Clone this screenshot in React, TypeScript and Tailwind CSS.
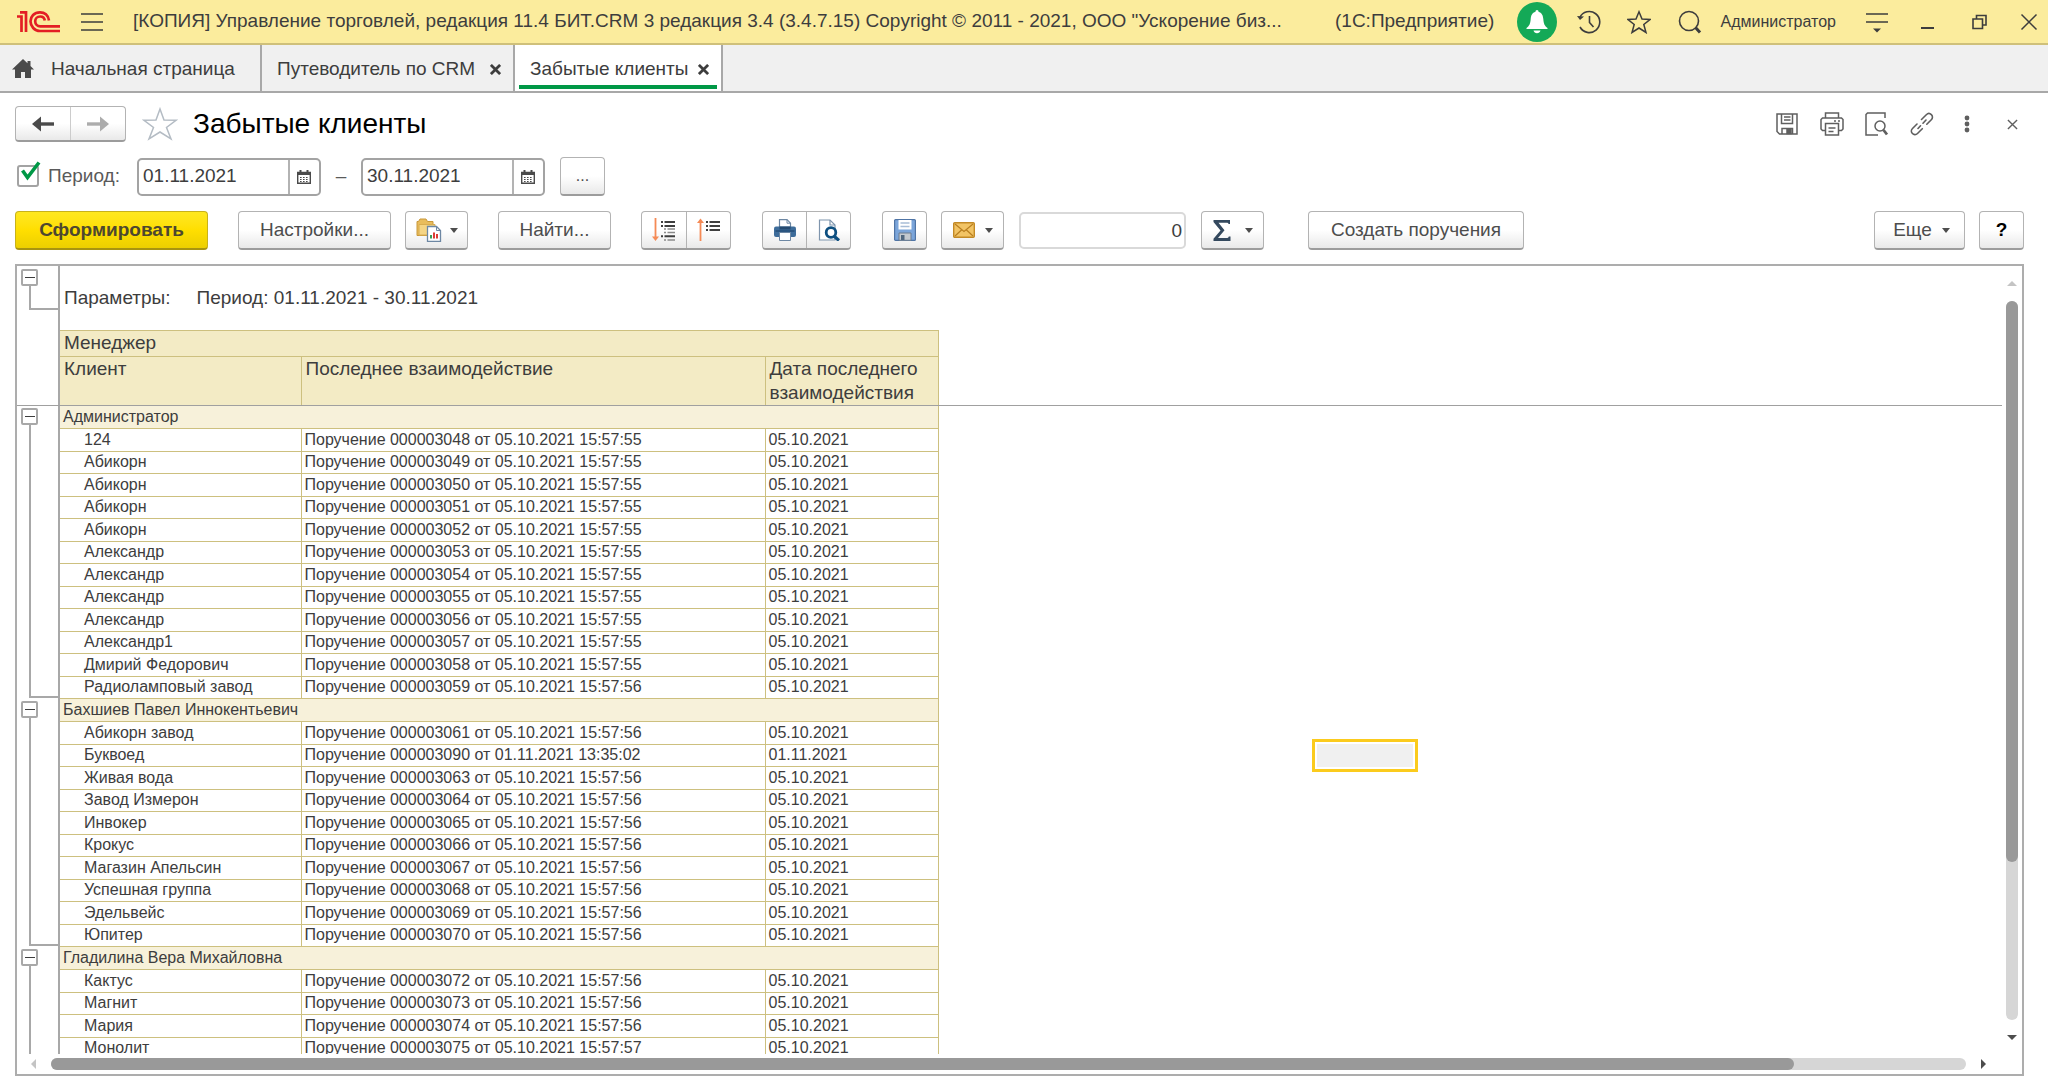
import React from "react";

type Row = [string, string, string];
type Group = { name: string; rows: Row[] };

const T = "05.10.2021 15:57:";
const D = "05.10.2021";
const task = (n: string, at: string) => `Поручение 00000${n} от ${at}`;

const groups: Group[] = [
  {
    name: "Администратор",
    rows: [
      ["124", task("3048", T + "55"), D],
      ["Абикорн", task("3049", T + "55"), D],
      ["Абикорн", task("3050", T + "55"), D],
      ["Абикорн", task("3051", T + "55"), D],
      ["Абикорн", task("3052", T + "55"), D],
      ["Александр", task("3053", T + "55"), D],
      ["Александр", task("3054", T + "55"), D],
      ["Александр", task("3055", T + "55"), D],
      ["Александр", task("3056", T + "55"), D],
      ["Александр1", task("3057", T + "55"), D],
      ["Дмирий Федорович", task("3058", T + "55"), D],
      ["Радиоламповый завод", task("3059", T + "56"), D],
    ],
  },
  {
    name: "Бахшиев Павел Иннокентьевич",
    rows: [
      ["Абикорн завод", task("3061", T + "56"), D],
      ["Буквоед", task("3090", "01.11.2021 13:35:02"), "01.11.2021"],
      ["Живая вода", task("3063", T + "56"), D],
      ["Завод Измерон", task("3064", T + "56"), D],
      ["Инвокер", task("3065", T + "56"), D],
      ["Крокус", task("3066", T + "56"), D],
      ["Магазин Апельсин", task("3067", T + "56"), D],
      ["Успешная группа", task("3068", T + "56"), D],
      ["Эдельвейс", task("3069", T + "56"), D],
      ["Юпитер", task("3070", T + "56"), D],
    ],
  },
  {
    name: "Гладилина Вера Михайловна",
    rows: [
      ["Кактус", task("3072", T + "56"), D],
      ["Магнит", task("3073", T + "56"), D],
      ["Мария", task("3074", T + "56"), D],
      ["Монолит", task("3075", T + "57"), D],
    ],
  },
];

const btn =
  "flex h-[39px] shrink-0 items-center justify-center rounded-[4px] border border-[#b3b3b3] border-b-2 border-b-[#9c9c9c] bg-linear-to-b from-white from-50% to-[#e9e9e9] text-[#4d4d4d]";

function Caret() {
  return (
    <svg className="h-[5px] w-2 shrink-0" viewBox="0 0 8 5" fill="#4d4d4d">
      <path d="M0 0h8L4 5z" />
    </svg>
  );
}

function Cross({ className, width }: { className: string; width: number }) {
  return (
    <svg className={className} viewBox="0 0 12 12" fill="none" stroke="currentColor" strokeWidth={width}>
      <path d="M1 1l10 10M11 1L1 11" />
    </svg>
  );
}

function TitleBar() {
  return (
    <header className="flex h-[45px] shrink-0 items-center border-b-2 border-[#cfc07a] bg-[#fbec9d] pr-2.5 pl-4 text-[#3d3d3d]">
      <svg className="h-6 w-[45px] shrink-0" viewBox="0 0 45 24" fill="none" stroke="#e31e24" strokeWidth="2.7" aria-label="1C">
        <path d="M1 6.500H5.500V22M4 2.300h6V22" />
        <path d="M33 10.500C32.300 5 28.500 2.300 24 2.300c-5.800 0-9.500 4-9.500 9s4 9.700 9.500 9.700H44" />
        <path d="M28.800 10.500c-.4-2.800-2.200-4-4.600-4-3 0-5 2-5 4.800s2.100 5 5 5H44" />
      </svg>
      <button aria-label="Меню" className="ml-5 shrink-0">
        <svg className="h-5 w-[22px]" viewBox="0 0 22 20" stroke="#3d3d3d" strokeWidth="1.6">
          <path d="M0 2h22M0 10h22M0 18h22" />
        </svg>
      </button>
      <h1 className="ml-[30px] w-[1182px] shrink truncate text-[19px]">
        [КОПИЯ] Управление торговлей, редакция 11.4 БИТ.CRM 3 редакция 3.4 (3.4.7.15) Copyright © 2011 - 2021, ООО "Ускорение биз...
      </h1>
      <span className="ml-5 shrink-0 text-[19px]">(1С:Предприятие)</span>
      <div className="ml-auto flex shrink-0 items-center">
        <button aria-label="Уведомления" className="flex size-10 items-center justify-center rounded-full bg-[#14a957]">
          <svg className="h-6 w-[22px]" viewBox="0 0 22 24" fill="white">
            <path d="M11 0c1 0 1.500.8 1.500 1.800C15.800 2.700 17 5.500 17.300 9c.4 5 1.500 7 4.200 9v1H.5v-1c2.700-2 3.800-4 4.200-9C5 5.500 6.200 2.700 9.500 1.800 9.500.8 10 0 11 0zM7.500 20.500h7c-.5 1.800-1.800 2.700-3.500 2.700s-3-.9-3.500-2.700z" />
          </svg>
        </button>
        <button aria-label="История" className="ml-5">
          <svg className="size-6" viewBox="0 0 24 24" fill="none" stroke="#3d3d3d" strokeWidth="1.6">
            <path d="M2.800 7.500A10.500 10.500 0 1 1 3 17M12.500 6v6.500l4 4.500" />
            <path d="M0 6l3 4L7 6.500z" fill="#3d3d3d" stroke="none" />
          </svg>
        </button>
        <button aria-label="Избранное" className="ml-[26px]">
          <svg className="size-6" viewBox="0 0 24 24" fill="none" stroke="#3d3d3d" strokeWidth="1.500">
            <path d="M12 1.800l3 7.200 8 .5-6.200 5 2.200 8-7-4.500L5 22.500l2.200-8L1 9.500 9 9z" />
          </svg>
        </button>
        <button aria-label="Поиск" className="ml-[27px]">
          <svg className="size-6" viewBox="0 0 24 24" fill="none" stroke="#3d3d3d" strokeWidth="1.600">
            <circle cx="11" cy="11" r="9.500" />
            <path d="M17.500 17.500L22 22.500" strokeWidth="3" />
          </svg>
        </button>
        <span className="ml-[19px] text-base">Администратор</span>
        <button aria-label="Настройка панели" className="ml-[30px]">
          <svg className="h-[22px] w-[22px]" viewBox="0 0 22 22" stroke="#3d3d3d" strokeWidth="1.600">
            <path d="M0 3h22M0 11h22" />
            <path d="M7 17.500h8l-4 4z" fill="#3d3d3d" stroke="none" />
          </svg>
        </button>
        <button aria-label="Свернуть" className="ml-8">
          <svg className="size-4" viewBox="0 0 16 16" stroke="#3d3d3d" strokeWidth="2">
            <path d="M1 14h13" />
          </svg>
        </button>
        <button aria-label="Восстановить" className="ml-9">
          <svg className="size-4" viewBox="0 0 16 16" fill="none" stroke="#3d3d3d" strokeWidth="1.600">
            <path d="M1 5h9.500v9.500H1zM4.500 5V1.500H14V11h-3.500" />
          </svg>
        </button>
        <button aria-label="Закрыть" className="ml-8">
          <Cross className="size-[18px]" width={1} />
        </button>
      </div>
    </header>
  );
}

function Tabs() {
  return (
    <nav className="flex h-12 shrink-0 border-b-2 border-[#a8a8a8] bg-[#f0f0f0] text-[19px] text-[#3d3d3d]">
      <a href="#home" className="flex w-[262px] items-center gap-[17px] border-r-2 border-[#a8a8a8] pt-0.5 pl-3">
        <svg className="h-5 w-[22px] shrink-0" viewBox="0 0 22 20" fill="#4a4a4a">
          <path d="M11 0L0 10.500h3V19h6v-6h4v6h6v-8.500h3L18.500 7V2h-3v2.300z" />
        </svg>
        Начальная страница
      </a>
      <div className="flex w-[253px] items-center justify-between border-r-2 border-[#a8a8a8] pt-0.5 pr-3 pl-[15px]">
        <a href="#guide">Путеводитель по CRM</a>
        <button aria-label="Закрыть вкладку">
          <Cross className="size-[11px]" width={3} />
        </button>
      </div>
      <div className="flex w-[208px] items-stretch border-r-2 border-[#a8a8a8] bg-white px-1">
        <div className="mb-0.5 flex flex-1 items-center justify-between border-b-4 border-[#009846] pt-2 pr-2 pl-[11px]">
          <a href="#clients">Забытые клиенты</a>
          <button aria-label="Закрыть вкладку">
            <Cross className="size-[11px]" width={3} />
          </button>
        </div>
      </div>
    </nav>
  );
}

function Arrow({ className }: { className: string }) {
  return (
    <svg className={className} viewBox="0 0 22 16" fill="none" stroke="currentColor" strokeWidth="3.400">
      <path d="M22 8H5" />
      <path d="M9 .5V15.500L0 8z" fill="currentColor" stroke="none" />
    </svg>
  );
}

function Heading() {
  return (
    <div className="flex h-9 items-center">
      <div className="flex h-9 w-[111px] rounded-[4px] border border-b-2 border-[#b3b3b3] border-b-[#9c9c9c] bg-linear-to-b from-white from-50% to-[#e9e9e9]">
        <button aria-label="Назад" className="flex flex-1 items-center justify-center border-r border-[#cccccc] text-[#4a4a4a]">
          <Arrow className="h-4 w-[22px]" />
        </button>
        <button aria-label="Вперед" className="flex flex-1 items-center justify-center text-[#acacac]">
          <Arrow className="h-4 w-[22px] rotate-180" />
        </button>
      </div>
      <button aria-label="В избранное" className="ml-4">
        <svg className="h-[34px] w-9" viewBox="0 0 36 34" fill="none" stroke="#b4bcc4" strokeWidth="1.500">
          <path d="M18 2l4 11 12 .3-9.500 7.200L29 32l-11-7-11 7 4.500-11.500L2 13.300 14 13z" />
        </svg>
      </button>
      <h2 className="ml-[15px] text-[28px] text-black">Забытые клиенты</h2>
      <div className="ml-auto flex items-center pr-1.5 text-[#5f5f5f]">
        <button aria-label="Сохранить">
          <svg className="size-6" viewBox="0 0 24 24" fill="none" stroke="currentColor" strokeWidth="1.500">
            <path d="M2 2h20v20H4.500L2 19.500z" />
            <path d="M6.500 2v9.500h11V2M9 5h6.500M9 8h6.500M7 22v-5.500h10.500V22" />
            <path d="M12 17.500h4v4h-4z" fill="currentColor" />
          </svg>
        </button>
        <button aria-label="Печать" className="ml-[21px]">
          <svg className="size-6" viewBox="0 0 24 24" fill="none" stroke="currentColor" strokeWidth="1.500">
            <path d="M5.500 6V1h13v5M5 18.500H2.500L1 17V7.500L2.500 6h19L23 7.500V17l-1.500 1.500H19M5.500 11.500h13V23h-13zM8.500 16h7M8.500 19.500h5M14 9h2M18 9h2" />
          </svg>
        </button>
        <button aria-label="Просмотр" className="ml-[21px]">
          <svg className="size-6" viewBox="0 0 24 24" fill="none" stroke="currentColor" strokeWidth="1.500">
            <path d="M20 6V1H2.500L1 2.500V23h12" />
            <circle cx="15" cy="14" r="5" />
            <path d="M18.500 18l3.500 4.500" strokeWidth="2.800" />
          </svg>
        </button>
        <button aria-label="Ссылка" className="ml-[21px]">
          <svg className="size-6" viewBox="0 0 24 24" fill="none" stroke="currentColor" strokeWidth="1.600" strokeLinecap="round">
            <path d="M8 16.500L10.500 13.800M13 11.200L16 8M11.500 7.500l4.800-4.800c3.400-3.400 8.400 1.600 5 5l-4.500 4.500M7 12l-4.500 4.500c-3.400 3.400 1.600 8.400 5 5l4.800-4.800" />
          </svg>
        </button>
        <button aria-label="Еще действия" className="ml-[30px]">
          <svg className="h-5 w-1.5" viewBox="0 0 6 20" fill="currentColor">
            <circle cx="3" cy="4" r="2.400" />
            <circle cx="3" cy="10" r="2.400" />
            <circle cx="3" cy="16" r="2.400" />
          </svg>
        </button>
        <button aria-label="Закрыть форму" className="ml-[37px]">
          <Cross className="size-[11px]" width={1.5} />
        </button>
      </div>
    </div>
  );
}

function DateField({ id, label, value }: { id: string; label: string; value: string }) {
  return (
    <div className="flex h-[38px] w-[184px] rounded-[5px] border-2 border-[#a3a3a3] bg-white">
      <input id={id} aria-label={label} defaultValue={value} className="w-0 flex-1 pl-1 text-[19px] text-[#3d3d3d] outline-none" />
      <button aria-label="Выбрать дату" className="flex w-[31px] items-center justify-center border-l-2 border-[#b3b3b3] pr-px">
        <svg className="h-3.5 w-3.5" viewBox="0 0 14 14" fill="none" stroke="#4a4a4a">
          <path d="M.7 2.500h12.600v10.800H.7z" strokeWidth="1.400" />
          <path d="M0 3.500h14" strokeWidth="3" />
          <path d="M3.500 0v3M10.500 0v3" strokeWidth="2" />
          <path d="M3 7.500h8M3 9.500h8M3 11.500h8" strokeWidth="1.200" strokeDasharray="1.600 1.400" />
        </svg>
      </button>
    </div>
  );
}

function Period() {
  return (
    <div className="mt-[15px] flex h-[39px] items-center text-[19px] text-[#5a5a5a]">
      <span className="relative ml-0.5 flex size-[23px]">
        <input
          id="period"
          type="checkbox"
          defaultChecked
          className="peer size-[22px] appearance-none rounded-[3px] border-2 border-[#a3a3a3] bg-white"
        />
        <svg className="pointer-events-none absolute -top-1 left-1 hidden h-[22px] w-5 peer-checked:block" viewBox="0 0 20 22" fill="none" stroke="#009846" strokeWidth="3.600">
          <path d="M1.500 9.500l5 7L18 1.500" />
        </svg>
      </span>
      <label htmlFor="period" className="ml-2 w-[89px]">
        Период:
      </label>
      <DateField id="from" label="Начало периода" value="01.11.2021" />
      <span className="w-10 text-center">–</span>
      <DateField id="to" label="Конец периода" value="30.11.2021" />
      <button aria-label="Выбрать период" className={btn + " ml-[15px] w-[45px] text-base"}>
        ...
      </button>
    </div>
  );
}

function Toolbar() {
  return (
    <div className="mt-[15px] flex h-[39px] items-center text-[19px]">
      <button className="flex h-[39px] w-[193px] items-center justify-center rounded-[4px] border border-b-2 border-[#c8b21a] border-b-[#a89410] bg-linear-to-b from-[#ffe81f] via-[#ffdf00] to-[#eccf00] font-bold text-[#4d4730]">
        Сформировать
      </button>
      <button className={btn + " ml-[30px] w-[153px]"}>Настройки...</button>
      <button aria-label="Варианты отчета" className={btn + " ml-3.5 w-[63px] gap-2"}>
        <svg className="h-6 w-[26px]" viewBox="0 0 26 24">
          <path d="M1 17.500V3.500h1.500L4 1h6l1.500 2.500H17v14z" fill="#e9bd5c" stroke="#c9983a" />
          <path d="M3 6.500h16v10.500H3z" fill="#f5d585" stroke="#d9ad50" />
          <path d="M11.500 8.500h9l4 4V23.300h-13z" fill="#fff" stroke="#6d87a3" strokeWidth="1.300" />
          <path d="M20.500 8.500v4h4" fill="none" stroke="#6d87a3" />
          <path d="M15 20.500V17" stroke="#3b9b56" strokeWidth="2" />
          <path d="M18 20.500v-6" stroke="#dc3c34" strokeWidth="2" />
          <path d="M21 20.500v-4.500" stroke="#dc3c34" strokeWidth="2" />
        </svg>
        <Caret />
      </button>
      <button className={btn + " ml-[30px] w-[113px]"}>Найти...</button>
      <div className={btn + " ml-[30px] w-[90px]"}>
        <button aria-label="Развернуть группы" className="flex h-full flex-1 items-center justify-center border-r border-[#b3b3b3]">
          <svg className="h-6 w-[23px]" viewBox="0 0 23 24" fill="none">
            <path d="M3.500 0v20" stroke="#f58a55" strokeWidth="1.800" />
            <path d="M0 18.500h7L3.500 23z" fill="#f58a55" />
            <path d="M9 4h2M12.500 4H23M9 8h2M12.500 8H23" stroke="#3f3f3f" strokeWidth="2" />
            <path d="M12 11h2M15.500 11H23M12 14.500h2M15.500 14.500H23M12 22h2M15.500 22H23" stroke="#8a8a8a" strokeWidth="1.700" />
            <path d="M9 18.300h2M12.500 18.300H23" stroke="#3f3f3f" strokeWidth="2" />
          </svg>
        </button>
        <button aria-label="Свернуть группы" className="flex h-full flex-1 items-center justify-center">
          <svg className="h-6 w-[23px]" viewBox="0 0 23 24" fill="none">
            <path d="M3.500 23V3" stroke="#f58a55" strokeWidth="1.800" />
            <path d="M0 5h7L3.500 .5z" fill="#f58a55" />
            <path d="M9 4h2M12.500 4H23M9 8h2M12.500 8H23M9 12h2M12.500 12H23" stroke="#3f3f3f" strokeWidth="2" />
          </svg>
        </button>
      </div>
      <div className={btn + " ml-[31px] w-[89px]"}>
        <button aria-label="Печать" className="flex h-full flex-1 items-center justify-center border-r border-[#b3b3b3]">
          <svg className="h-[22px] w-[22px]" viewBox="0 0 22 22">
            <path d="M5.500 9V.7h7.500l3.500 3.500V9z" fill="#fff" stroke="#6d87a3" strokeWidth="1.200" />
            <path d="M13 .7v3.500h3.500" fill="none" stroke="#6d87a3" />
            <rect x="0" y="7.500" width="22" height="10.500" rx="2" fill="#3d6c9a" />
            <path d="M5.500 7.500h11v3h-11z" fill="#254a70" />
            <path d="M1.500 12h19" stroke="#234a73" strokeWidth="1.300" />
            <path d="M5.500 13.500h11v8h-11z" fill="#fff" stroke="#6d87a3" />
          </svg>
        </button>
        <button aria-label="Предварительный просмотр" className="flex h-full flex-1 items-center justify-center">
          <svg className="h-[22px] w-[22px]" viewBox="0 0 22 22" fill="none">
            <path d="M1.500 1h10.500l5 5v15H1.500z" fill="#fff" stroke="#7f95ad" strokeWidth="1.200" />
            <path d="M12 1v5h5" stroke="#7f95ad" strokeWidth="1.200" />
            <circle cx="13" cy="13.500" r="4.800" fill="#fff" stroke="#0d4f80" strokeWidth="2.800" />
            <path d="M16.500 17.500l4.500 4" stroke="#0d4f80" strokeWidth="3.200" />
          </svg>
        </button>
      </div>
      <button aria-label="Сохранить" className={btn + " ml-[31px] w-[45px]"}>
        <svg className="h-[22px] w-[22px]" viewBox="0 0 22 22">
          <rect x=".6" y=".6" width="20.800" height="20.800" rx="1" fill="#7ba5da" stroke="#4f74a5" strokeWidth="1.200" />
          <path d="M4.500 1h13v9.500h-13z" fill="#fff" />
          <path d="M6.500 4h9M6.500 7.500h9" stroke="#a8bdd6" strokeWidth="1.300" />
          <path d="M5 14h12v7.300H5z" fill="#c3c9cf" stroke="#6c7d90" />
          <path d="M7 16h3.500v5H7z" fill="#50677f" />
        </svg>
      </button>
      <button aria-label="Отправить" className={btn + " ml-3.5 w-[63px] gap-2.5"}>
        <svg className="h-4 w-[22px]" viewBox="0 0 22 16">
          <rect x=".7" y=".7" width="20.600" height="14.600" rx="1" fill="#f2c465" stroke="#c38a26" strokeWidth="1.400" />
          <path d="M2 2l9 7.500L20 2M2 14l6.500-6M20 14l-6.500-6" fill="none" stroke="#b97f20" strokeWidth="1.200" />
        </svg>
        <Caret />
      </button>
      <input
        aria-label="Сумма выделенных ячеек"
        defaultValue="0"
        className="ml-[15px] h-[37px] w-[167px] rounded-[5px] border-2 border-[#d9d9d9] bg-white pr-0.5 text-right text-[19px] text-[#3d3d3d]"
      />
      <button aria-label="Сумма" className={btn + " ml-[15px] w-[63px] gap-3.5"}>
        <svg className="h-[21px] w-[18px]" viewBox="0 0 18 21" fill="#34495e">
          <path d="M.5 0h16.500v4h-1.500c-.2-1-.7-1.200-2-1.200H5.500l6 7.500-6.500 7.700h8.500c1.300 0 2-.3 2.300-1.500h1.700V21H.5v-2.200l7-8.200-7-8.500z" />
        </svg>
        <Caret />
      </button>
      <button className={btn + " ml-11 w-[216px]"}>Создать поручения</button>
      <button className={btn + " ml-auto w-[91px] gap-2.5 pl-1"}>
        Еще
        <Caret />
      </button>
      <button aria-label="Справка" className={btn + " ml-3.5 w-[45px] font-bold text-black"}>
        ?
      </button>
    </div>
  );
}

function Bracket() {
  return (
    <>
      <span className="absolute top-[18px] right-0 bottom-0 left-3 border-b-2 border-l-2 border-[#a8a8a8]" />
      <button aria-label="Свернуть" className="absolute top-[3px] left-1 flex h-[17px] w-[17px] items-center justify-center rounded-[2px] border-2 border-[#a8a8a8] bg-white">
        <span className="h-px w-2.5 bg-[#3d3d3d]" />
      </button>
    </>
  );
}

const line = "border-[#cdc07f]";

function Sheet() {
  return (
    <div className="relative flex-1 overflow-hidden">
      <table className="w-[921px] table-fixed border-collapse text-left text-base leading-5 text-[#3d3d3d]">
        <colgroup>
          <col className="w-[42px]" />
          <col className="w-[242px]" />
          <col className="w-[464px]" />
          <col className="w-[173px]" />
        </colgroup>
        <thead className="text-[19px] leading-6">
          <tr className="h-11">
            <td className="relative border-r-2 border-[#a8a8a8] p-0">
              <Bracket />
            </td>
            <td colSpan={3} className="p-0 pt-5 pl-1 align-top">
              <span className="mr-[26px]">Параметры:</span>
              <span>Период: 01.11.2021 - 30.11.2021</span>
            </td>
          </tr>
          <tr className="h-5">
            <td className="border-r-2 border-[#a8a8a8] p-0" />
            <td colSpan={3} className="p-0" />
          </tr>
          <tr className="h-[26px]">
            <td className="border-r-2 border-[#a8a8a8] p-0" />
            <th colSpan={3} className={"border bg-[#f3ebc5] p-0 pl-1 font-normal " + line}>
              Менеджер
            </th>
          </tr>
          <tr className="h-[49px] align-top">
            <td className="border-r-2 border-[#a8a8a8] p-0" />
            <th className={"border bg-[#f3ebc5] p-0 pl-1 font-normal " + line}>Клиент</th>
            <th className={"border bg-[#f3ebc5] p-0 pl-1 font-normal " + line}>Последнее взаимодействие</th>
            <th className={"border bg-[#f3ebc5] p-0 pl-1 font-normal " + line}>Дата последнего взаимодействия</th>
          </tr>
        </thead>
        {groups.map((g) => (
          <tbody key={g.name}>
            <tr className="h-[23px]">
              <td rowSpan={g.rows.length + 1} className="relative border-r-2 border-[#a8a8a8] p-0">
                <Bracket />
              </td>
              <th colSpan={3} className={"border bg-[#f7f1da] p-0 pl-[3px] font-normal " + line}>
                {g.name}
              </th>
            </tr>
            {g.rows.map((r) => (
              <tr key={r[1]} className="odd:h-[22px] even:h-[23px]">
                <td className={"border bg-white p-0 pl-6 " + line}>{r[0]}</td>
                <td className={"border bg-white p-0 pl-[3px] " + line}>{r[1]}</td>
                <td className={"border bg-white p-0 pl-[3px] " + line}>{r[2]}</td>
              </tr>
            ))}
          </tbody>
        ))}
      </table>
      <div className="absolute top-[139px] right-0 left-0 h-px bg-[#a0a0a0]" />
      <div className="absolute top-[473px] left-[1295px] h-[33px] w-[106px] border-3 border-[#fbcb1d] bg-white p-0.5">
        <div className="h-full bg-[#f0f0f0]" />
      </div>
    </div>
  );
}

function Report() {
  return (
    <section className="mt-3.5 flex min-h-0 flex-1 flex-col border-2 border-[#adadad] bg-white">
      <div className="flex min-h-0 flex-1">
        <Sheet />
        <div className="flex w-5 flex-col items-center pt-[15px] pb-3.5">
          <svg className="h-[5px] w-2.5 shrink-0" viewBox="0 0 10 5" fill="#c4c4c4">
            <path d="M0 5h10L5 0z" />
          </svg>
          <div className="my-[15px] w-3 flex-1 rounded-full bg-[#d6d6d6]">
            <div className="h-[78%] rounded-full bg-[#999999]" />
          </div>
          <svg className="h-[5px] w-2.5 shrink-0" viewBox="0 0 10 5" fill="#4d4d4d">
            <path d="M0 0h10L5 5z" />
          </svg>
        </div>
      </div>
      <div className="flex h-5 shrink-0 items-center pr-9 pl-3.5">
        <svg className="h-2.5 w-[5px] shrink-0" viewBox="0 0 5 10" fill="#c4c4c4">
          <path d="M5 0v10L0 5z" />
        </svg>
        <div className="mx-[15px] h-3 flex-1 rounded-full bg-[#d6d6d6]">
          <div className="h-3 w-[91%] rounded-full bg-[#999999]" />
        </div>
        <svg className="h-2.5 w-[5px] shrink-0" viewBox="0 0 5 10" fill="#4d4d4d">
          <path d="M0 0v10l5-5z" />
        </svg>
      </div>
    </section>
  );
}

export default function App() {
  return (
    <div className="flex h-screen flex-col overflow-hidden bg-white font-['Liberation_Sans',Arial,sans-serif]">
      <TitleBar />
      <Tabs />
      <main className="flex min-h-0 flex-1 flex-col pt-[13px] pr-6 pb-[15px] pl-[15px]">
        <Heading />
        <Period />
        <Toolbar />
        <Report />
      </main>
    </div>
  );
}
